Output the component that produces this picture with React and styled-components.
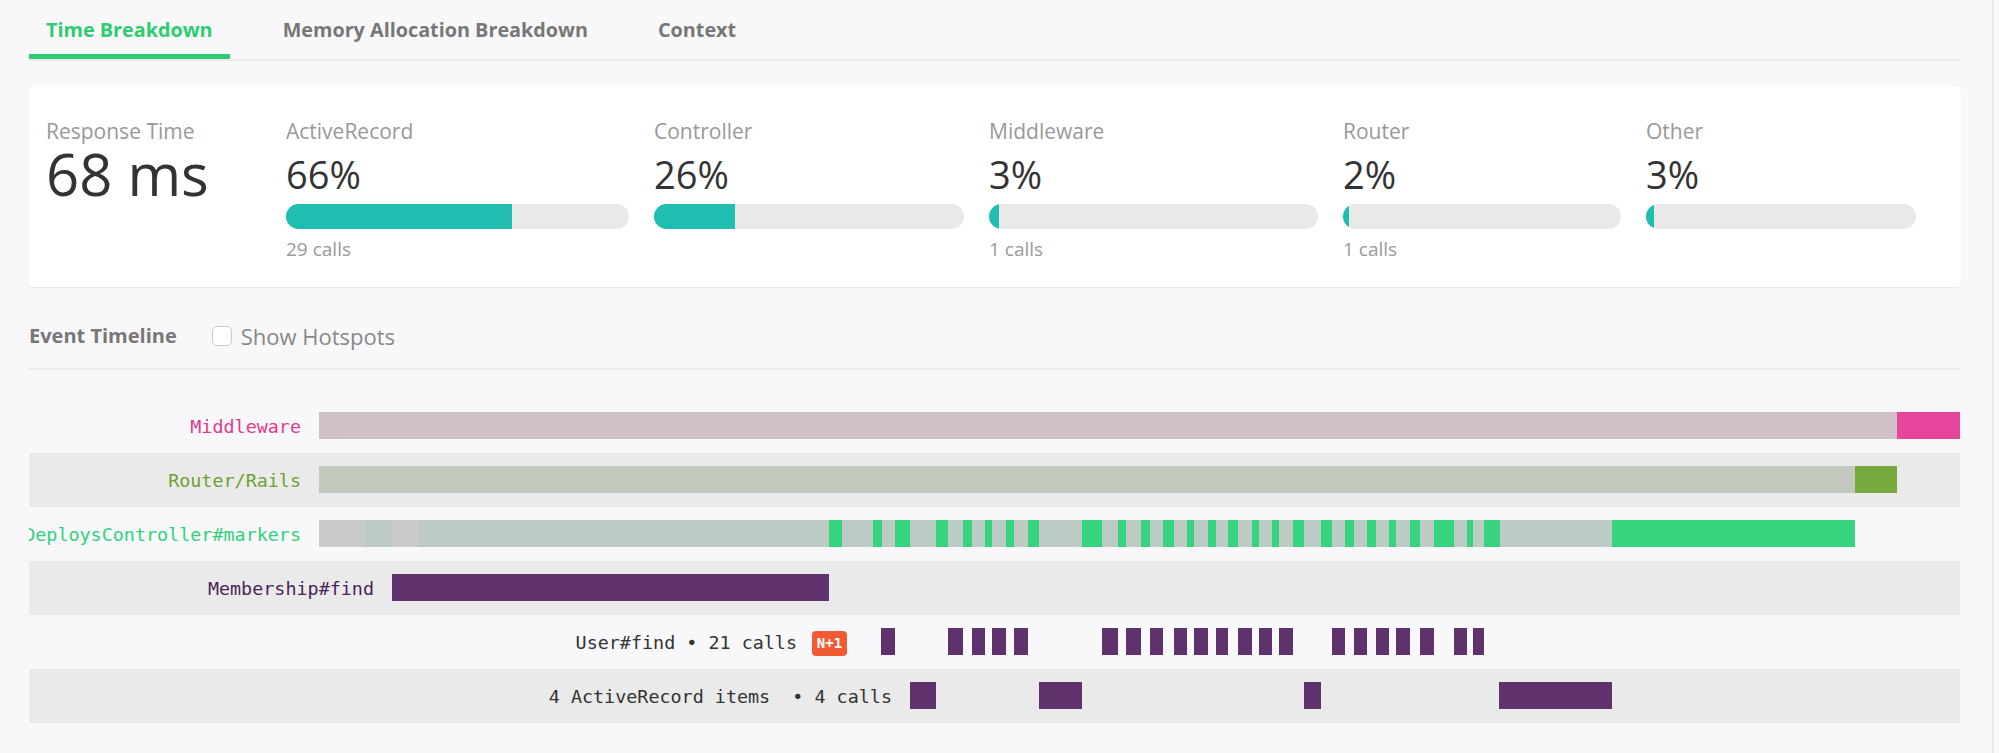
import React from "react";
import styled, { createGlobalStyle } from "styled-components";

const TRACK = 1641;

const stats = [
  { label: "ActiveRecord", pct: 66, calls: 29, width: 343 },
  { label: "Controller", pct: 26, width: 310 },
  { label: "Middleware", pct: 3, calls: 1, width: 329 },
  { label: "Router", pct: 2, calls: 1, width: 278 },
  { label: "Other", pct: 3, width: 270 },
];

const GREEN = "#37d47f";
const PURPLE = "#5f326e";

const deploysGreen = [
  [510, 523], [554, 563], [576, 591], [617, 629], [644, 653], [666, 673],
  [687, 695], [709, 720], [763, 783], [799, 807], [822, 831], [844, 855],
  [868, 875], [889, 897], [909, 919], [933, 940], [953, 960], [974, 985],
  [1002, 1013], [1026, 1035], [1048, 1057], [1070, 1077], [1091, 1101],
  [1115, 1135], [1148, 1154], [1165, 1181], [1293, 1536],
];

const userCalls = [
  [562, 576], [629, 644], [653, 666], [673, 687], [695, 709], [783, 799],
  [807, 822], [831, 844], [855, 868], [875, 889], [897, 909], [919, 933],
  [940, 953], [960, 974], [1013, 1026], [1035, 1048], [1057, 1070],
  [1077, 1091], [1101, 1115], [1135, 1148], [1154, 1165],
];

const rows = [
  {
    label: "Middleware",
    color: "#e5398f",
    spans: [
      [0, 1641, "#cfbfc7"],
      [1578, 1641, "#e5459a"],
    ],
  },
  {
    label: "Router/Rails",
    color: "#6fa132",
    spans: [
      [0, 1578, "#c3c8bd"],
      [1536, 1578, "#77aa3e"],
    ],
  },
  {
    label: "DeploysController#markers",
    color: "#2fd27a",
    spans: [
      [0, 1536, "#bccbc3"],
      [0, 46, "#cacaca"],
      [73, 100, "#cacaca"],
      ...deploysGreen.map(([a, b]) => [a, b, GREEN]),
    ],
  },
  {
    label: "Membership#find",
    color: "#4a2459",
    spans: [[73, 510, PURPLE]],
  },
  {
    label: "User#find • 21 calls",
    color: "#333",
    badge: "N+1",
    spans: userCalls.map(([a, b]) => [a, b, PURPLE]),
  },
  {
    label: "4 ActiveRecord items  • 4 calls",
    color: "#333",
    spans: [
      [591, 617, PURPLE],
      [720, 763, PURPLE],
      [985, 1002, PURPLE],
      [1180, 1293, PURPLE],
    ],
  },
];

const pct = (px) => (px / TRACK) * 100;

function App() {
  return (
    <>
      <GlobalStyle />
      <Page>
        <TabBar>
          <Tab active>Time Breakdown</Tab>
          <Tab>Memory Allocation Breakdown</Tab>
          <Tab>Context</Tab>
        </TabBar>

        <Card>
          <Stat width={215}>
            <StatLabel>Response Time</StatLabel>
            <BigValue>68 ms</BigValue>
          </Stat>
          {stats.map((s) => (
            <Stat key={s.label} width={s.width}>
              <StatLabel>{s.label}</StatLabel>
              <Percent>{s.pct}%</Percent>
              <Meter>
                <MeterFill style={{ width: `${s.pct}%` }} />
              </Meter>
              {s.calls && <Calls>{s.calls} calls</Calls>}
            </Stat>
          ))}
        </Card>

        <TimelineHeader>
          <SectionTitle>Event Timeline</SectionTitle>
          <CheckLabel>
            <CheckBox />
            Show Hotspots
          </CheckLabel>
        </TimelineHeader>

        <Timeline>
          {rows.map((row, i) => {
            const start = Math.min(...row.spans.map((s) => s[0]));
            return (
              <Row key={row.label} striped={i % 2 === 1}>
                <Track>
                  <RowLabel
                    color={row.color}
                    style={{ right: `calc(${100 - pct(start)}% + 18px)` }}
                  >
                    {row.label}
                    {row.badge && <Badge>{row.badge}</Badge>}
                  </RowLabel>
                  {row.spans.map(([a, b, c], j) => (
                    <Segment
                      key={j}
                      color={c}
                      style={{ left: `${pct(a)}%`, width: `${pct(b - a)}%` }}
                    />
                  ))}
                </Track>
              </Row>
            );
          })}
        </Timeline>
      </Page>
    </>
  );
}

const GlobalStyle = createGlobalStyle`
  * {
    box-sizing: border-box;
  }
  body {
    margin: 0;
    background: #f8f8fa;
    font-family: "Open Sans", sans-serif;
  }
`;

const Page = styled.div`
  width: 1994px;
  min-height: 100vh;
  padding: 0 31px 0 29px;
  border-right: 2px solid #e9e9ec;
`;

const TabBar = styled.div`
  display: flex;
  border-bottom: 2px solid #ececef;
`;

const Tab = styled.div`
  display: flex;
  align-items: center;
  height: 59px;
  padding: 4px 17px 0;
  margin-right: 36px;
  font-size: 19.8px;
  font-weight: 700;
  color: ${(p) => (p.active ? "#2ecc71" : "#777")};
  border-bottom: 5px solid ${(p) => (p.active ? "#2ecc71" : "transparent")};
`;

const Card = styled.div`
  display: flex;
  gap: 25px;
  height: 200px;
  margin-top: 26px;
  padding: 32px 17px 0;
  background: #fff;
  border-radius: 4px;
  box-shadow: 0 1px 2px rgba(0, 0, 0, 0.07);
`;

const Stat = styled.div`
  flex: none;
  width: ${(p) => p.width}px;
`;

const StatLabel = styled.div`
  font-size: 21px;
  line-height: 24px;
  color: #999;
`;

const BigValue = styled.div`
  margin-top: 2px;
  font-size: 58px;
  line-height: 58px;
  color: #333;
`;

const Percent = styled.div`
  margin-top: 12px;
  font-size: 38px;
  line-height: 38px;
  color: #333;
`;

const Meter = styled.div`
  height: 25px;
  margin-top: 11px;
  border-radius: 13px;
  background: #e9e9e9;
  overflow: hidden;
`;

const MeterFill = styled.div`
  height: 100%;
  background: #1fbdb2;
`;

const Calls = styled.div`
  margin-top: 8px;
  font-size: 19px;
  line-height: 24px;
  color: #999;
`;

const TimelineHeader = styled.div`
  display: flex;
  align-items: center;
  gap: 35px;
  margin-top: 37px;
  padding-bottom: 20px;
  border-bottom: 2px solid #ececef;
`;

const SectionTitle = styled.div`
  font-size: 20px;
  line-height: 24px;
  font-weight: 700;
  color: #777;
`;

const CheckLabel = styled.label`
  display: flex;
  align-items: center;
  gap: 9px;
  font-size: 22px;
  line-height: 24px;
  color: #888;
`;

const CheckBox = styled.span`
  width: 20px;
  height: 20px;
  background: #fff;
  border: 1.5px solid #c9c9c9;
  border-radius: 5px;
`;

const Timeline = styled.div`
  margin-top: 29px;
`;

const Row = styled.div`
  display: flex;
  height: 54px;
  padding-left: 290px;
  overflow: hidden;
  background: ${(p) => (p.striped ? "#eaeaea" : "transparent")};
  margin-right: 1px;
`;

const Track = styled.div`
  position: relative;
  flex: 1;
`;

const RowLabel = styled.div`
  position: absolute;
  top: 0;
  bottom: 0;
  display: flex;
  align-items: center;
  white-space: pre;
  font-family: "DejaVu Sans Mono", monospace;
  font-size: 18.4px;
  color: ${(p) => p.color};
`;

const Badge = styled.span`
  display: flex;
  align-items: center;
  justify-content: center;
  width: 35px;
  height: 25px;
  margin: 2px 16px 0 15px;
  border-radius: 4px;
  background: #f05b34;
  color: #fff;
  font-size: 14px;
  font-weight: 700;
`;

const Segment = styled.div`
  position: absolute;
  top: 13px;
  height: 27px;
  background: ${(p) => p.color};
`;

export default App;
